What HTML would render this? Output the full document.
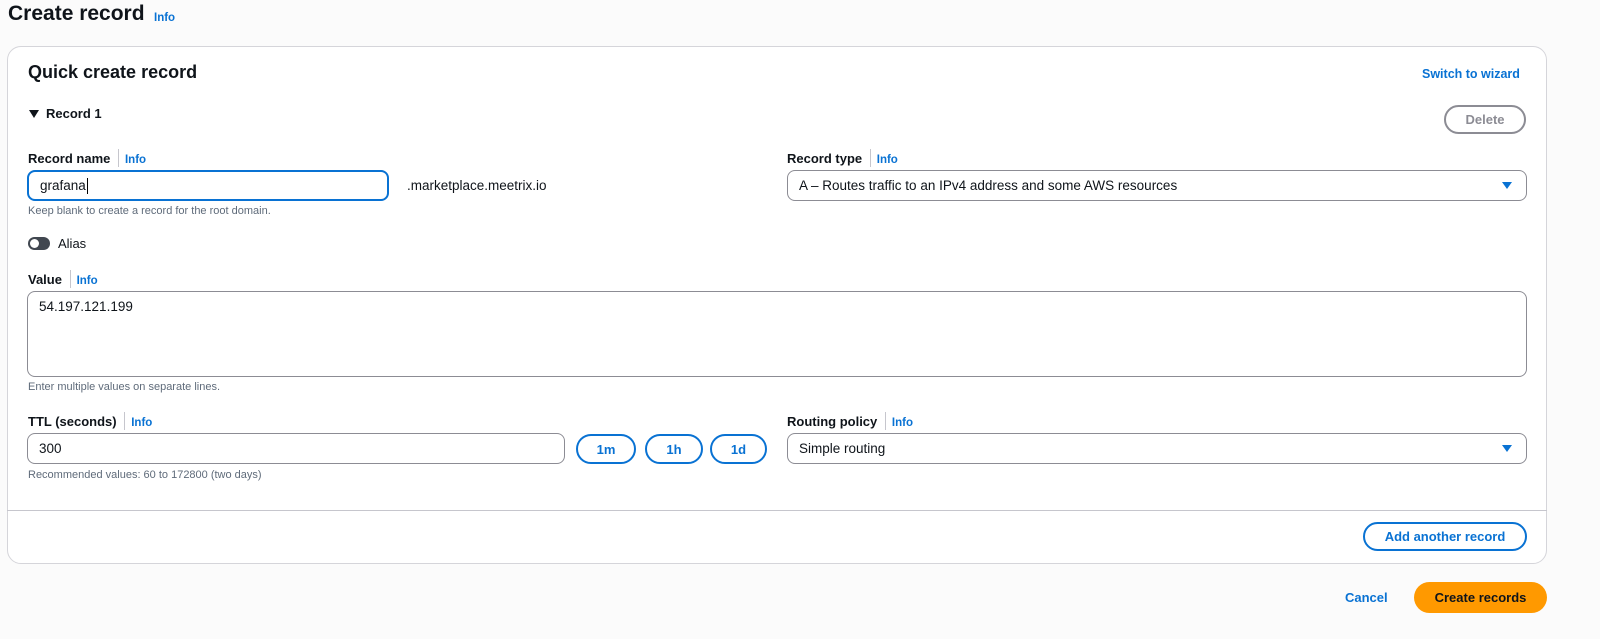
<!DOCTYPE html>
<html><head><style>
*{box-sizing:border-box;margin:0;padding:0}
body{width:1600px;height:639px;background:#fbfbfb;font-family:"Liberation Sans",sans-serif;color:#0f141a;position:relative;overflow:hidden}
.a{position:absolute;white-space:nowrap}
.lbl{font-size:13px;font-weight:bold}
.info{font-size:11.5px;font-weight:bold;color:#0972d3}
.sep{border-left:1px solid #c6c6cd;height:18px;display:inline-block}
.inp{position:absolute;border:1px solid #8c8c94;border-radius:8px;background:#fff;font-size:13.5px;padding-left:11px;display:flex;align-items:center}
.hint{font-size:11px;color:#5f6b7a}
.pill{position:absolute;border:2px solid #0972d3;border-radius:20px;color:#0972d3;font-weight:bold;font-size:13px;display:flex;align-items:center;justify-content:center;background:#fff}
.tri{position:absolute;width:0;height:0;border-left:5px solid transparent;border-right:5px solid transparent;border-top:7px solid #0972d3}
</style></head><body>
<div class="a" style="left:8px;top:2px;font-size:21px;font-weight:bold">Create record</div>
<div class="a info" style="left:154px;top:12px">Info</div>
<div class="a" style="left:7px;top:46px;width:1540px;height:518px;background:#fff;border:1px solid #d5d5da;border-radius:14px"></div>
<div class="a" style="left:7px;top:510px;width:1540px;border-top:1px solid #c6c6cd"></div>
<div class="a" style="left:28px;top:62px;font-size:18px;font-weight:bold">Quick create record</div>
<div class="a info" style="left:1422px;top:67px;font-size:12.5px">Switch to wizard</div>
<div class="a" style="left:29px;top:110px;width:0;height:0;border-left:5px solid transparent;border-right:5px solid transparent;border-top:8px solid #0f141a"></div>
<div class="a lbl" style="left:46px;top:106px">Record 1</div>
<div class="pill" style="left:1444px;top:105px;width:82px;height:29px;border-color:#8c8c94;color:#8c8c94">Delete</div>

<div class="a lbl" style="left:28px;top:149px">Record name <span class="sep" style="vertical-align:-4px;margin:0 6px 0 4px"></span><span class="info">Info</span></div>
<div class="inp" style="left:27px;top:170px;width:362px;height:31px;border:2px solid #0972d3">grafana<span style="border-left:1px solid #000;height:16px;margin-left:1px"></span></div>
<div class="a" style="left:407px;top:178px;font-size:13.5px">.marketplace.meetrix.io</div>
<div class="a hint" style="left:28px;top:205px">Keep blank to create a record for the root domain.</div>
<div class="a" style="left:28px;top:237px;width:22px;height:13px;border-radius:7px;background:#414750"></div>
<div class="a" style="left:30px;top:239px;width:9px;height:9px;border-radius:50%;background:#fff"></div>
<div class="a" style="left:58px;top:236px;font-size:13px">Alias</div>

<div class="a lbl" style="left:787px;top:149px">Record type <span class="sep" style="vertical-align:-4px;margin:0 6px 0 4px"></span><span class="info">Info</span></div>
<div class="inp" style="left:787px;top:170px;width:740px;height:31px">A – Routes traffic to an IPv4 address and some AWS resources</div>
<div class="tri" style="left:1502px;top:182px"></div>

<div class="a lbl" style="left:28px;top:270px">Value <span class="sep" style="vertical-align:-4px;margin:0 6px 0 4px"></span><span class="info">Info</span></div>
<div class="inp" style="left:27px;top:291px;width:1500px;height:86px;align-items:flex-start;padding-top:7px">54.197.121.199</div>
<div class="a hint" style="left:28px;top:381px">Enter multiple values on separate lines.</div>

<div class="a lbl" style="left:28px;top:412px">TTL (seconds) <span class="sep" style="vertical-align:-4px;margin:0 6px 0 4px"></span><span class="info">Info</span></div>
<div class="inp" style="left:27px;top:433px;width:538px;height:31px">300</div>
<div class="pill" style="left:576px;top:434px;width:60px;height:30px">1m</div>
<div class="pill" style="left:645px;top:434px;width:58px;height:30px">1h</div>
<div class="pill" style="left:710px;top:434px;width:57px;height:30px">1d</div>
<div class="a hint" style="left:28px;top:469px">Recommended values: 60 to 172800 (two days)</div>

<div class="a lbl" style="left:787px;top:412px">Routing policy <span class="sep" style="vertical-align:-4px;margin:0 6px 0 4px"></span><span class="info">Info</span></div>
<div class="inp" style="left:787px;top:433px;width:740px;height:31px">Simple routing</div>
<div class="tri" style="left:1502px;top:445px"></div>

<div class="pill" style="left:1363px;top:522px;width:164px;height:29px">Add another record</div>
<div class="a info" style="left:1345px;top:590px;font-size:13px">Cancel</div>
<div class="a" style="left:1414px;top:582px;width:133px;height:31px;border-radius:16px;background:#ff9900;font-size:13px;font-weight:bold;display:flex;align-items:center;justify-content:center">Create records</div>
</body></html>
